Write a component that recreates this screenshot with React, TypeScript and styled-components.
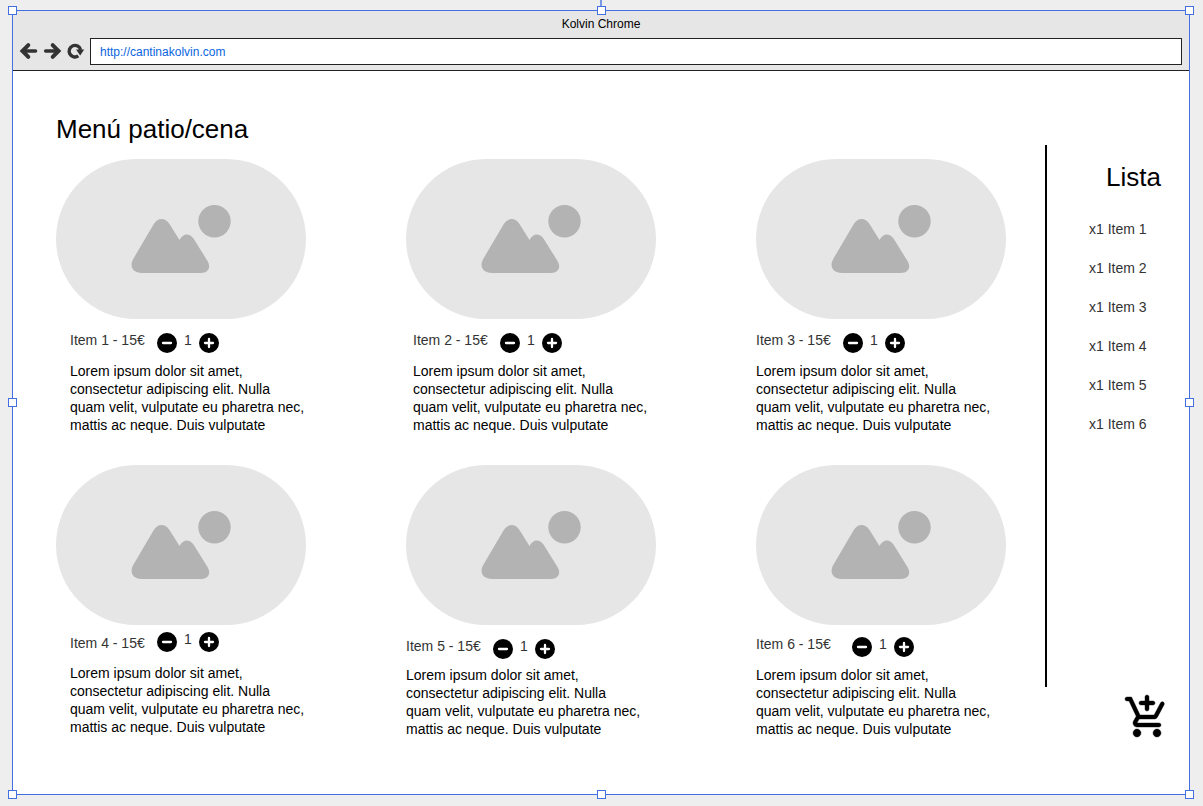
import React from "react";
import styled, { createGlobalStyle } from "styled-components";

const GlobalStyle = createGlobalStyle`
  *, *::before, *::after { box-sizing: border-box; }
  body {
    margin: 0;
    background: #eeeeee;
    color: #000;
    font-family: "Liberation Sans", Arial, sans-serif;
    font-size: 14px;
    line-height: 18px;
  }
  h1, h2, p, ul { margin: 0; padding: 0; font-weight: 400; }
  button { margin: 0; padding: 0; border: 0; background: none; color: inherit; font: inherit; cursor: pointer; }
  svg { display: block; }
`;

const Canvas = styled.div`
  display: flex;
  min-height: 100vh;
  padding: 10px 13px 11px 12px;
`;

const BrowserWindow = styled.div`
  position: relative;
  flex: 1;
  display: flex;
  flex-direction: column;
  border: 1px solid #4270e0;
  background: #fff;
`;

const HandleLayer = styled.div`
  position: absolute;
  inset: -1px 0 0 -1px;
  pointer-events: none;
`;

const Handle = styled.span<{ $x: number; $y: number }>`
  position: absolute;
  left: ${(p) => p.$x}%;
  top: ${(p) => p.$y}%;
  width: 9px;
  height: 9px;
  margin: -4px 0 0 -4px;
  border: 1px solid #4270e0;
  background: #fff;
`;

const RotationStem = styled.span`
  position: absolute;
  left: 50%;
  bottom: 100%;
  width: 2px;
  height: 10px;
  margin-left: -1px;
  background: #7b98e4;
`;

const Chrome = styled.header`
  height: 60px;
  border-bottom: 1px solid #222;
  background: #e6e6e6;
`;

const WindowTitle = styled.div`
  padding-top: 4px;
  font-size: 12px;
  text-align: center;
`;

const Toolbar = styled.div`
  display: flex;
  align-items: center;
  gap: 6px;
  padding: 5px 7px 0 8px;
`;

const NavButton = styled.button`
  width: 17px;
  height: 17px;
  color: #333;
`;

const Address = styled.input`
  flex: 1;
  min-width: 0;
  height: 27px;
  padding: 0 9px;
  border: 1px solid #222;
  border-radius: 0;
  outline: 0;
  background: #fff;
  color: #0a66e0;
  font: inherit;
  font-size: 12px;
`;

const Page = styled.div`
  flex: 1;
  display: flex;
`;

const Catalog = styled.main`
  flex: 1;
  padding: 41px 39px 0 43px;
`;

const Heading = styled.h1`
  font-size: 26px;
  line-height: 34px;
`;

const CardGrid = styled.div`
  display: grid;
  grid-template-columns: repeat(3, 250px);
  justify-content: space-between;
  row-gap: 31px;
  margin-top: 13px;
`;

const Card = styled.article`
  display: flex;
  flex-direction: column;
`;

const Picture = styled.div`
  display: flex;
  height: 160px;
  border-radius: 80px;
  background: #e6e6e6;
`;

const Details = styled.div<{ $indent: number; $top: number; $gap: number }>`
  display: flex;
  flex-direction: column;
  gap: ${(p) => p.$gap}px;
  padding-top: ${(p) => p.$top}px;
  padding-left: ${(p) => p.$indent}px;
`;

const Caption = styled.div<{ $align: "flex-start" | "flex-end" }>`
  display: flex;
  align-items: ${(p) => p.$align};
  color: #333;
`;

const ItemName = styled.h2<{ $width: number }>`
  width: ${(p) => p.$width}px;
  font-size: 14px;
`;

const Stepper = styled.div`
  display: flex;
  align-items: flex-end;
  height: 22px;
`;

const StepButton = styled.button`
  width: 20px;
  height: 20px;
`;

const Count = styled.output`
  width: 22px;
  align-self: flex-start;
  text-align: center;
`;

const Description = styled.p`
  white-space: pre-line;
`;

const Sidebar = styled.aside`
  width: 144px;
  display: flex;
  flex-direction: column;
  padding: 74px 0 53px;
`;

const OrderPanel = styled.section`
  flex: 1;
  padding: 15px 0 0 42px;
  border-left: 2px solid #000;
`;

const OrderTitle = styled.h2`
  padding-left: 17px;
  font-size: 26px;
  line-height: 34px;
`;

const OrderList = styled.ul`
  display: flex;
  flex-direction: column;
  gap: 21px;
  margin-top: 26px;
  color: #333;
  list-style: none;
`;

const CartButton = styled.button`
  align-self: flex-end;
  width: 48px;
  height: 48px;
  margin: 6px 18px 0 0;
  color: #000;
`;

type Item = {
  id: number;
  indent: number;
  top: number;
  gap: number;
  nameWidth: number;
  align: "flex-start" | "flex-end";
};

const items: Item[] = [
  { id: 1, indent: 14, top: 12, gap: 9, nameWidth: 87, align: "flex-start" },
  { id: 2, indent: 7, top: 12, gap: 9, nameWidth: 87, align: "flex-start" },
  { id: 3, indent: 0, top: 12, gap: 9, nameWidth: 87, align: "flex-start" },
  { id: 4, indent: 14, top: 5, gap: 12, nameWidth: 87, align: "flex-end" },
  { id: 5, indent: 0, top: 12, gap: 7, nameWidth: 87, align: "flex-start" },
  { id: 6, indent: 0, top: 10, gap: 9, nameWidth: 96, align: "flex-start" },
];

const blurb =
  "Lorem ipsum dolor sit amet,\nconsectetur adipiscing elit. Nulla\nquam velit, vulputate eu pharetra nec,\nmattis ac neque. Duis vulputate";

const handles = [
  [0, 0], [50, 0], [100, 0],
  [0, 50], [100, 50],
  [0, 100], [50, 100], [100, 100],
];

const BackIcon = () => (
  <svg width="17" height="17" viewBox="0 0 17 17" fill="none" stroke="currentColor" strokeLinecap="round" overflow="visible">
    <path d="M2 8H14.500" strokeWidth="3.600" />
    <path d="M7.300 2.200L1.500 8L7.300 13.800" strokeWidth="4" />
  </svg>
);

const ForwardIcon = () => (
  <svg width="17" height="17" viewBox="0 0 17 17" fill="none" stroke="currentColor" strokeLinecap="round" overflow="visible">
    <path d="M1.700 8H14" strokeWidth="3.600" />
    <path d="M8.700 2.200L14.500 8L8.700 13.800" strokeWidth="4" />
  </svg>
);

const ReloadIcon = () => (
  <svg width="17" height="17" viewBox="0 0 17 17" overflow="visible">
    <path d="M11.300 12.900A5.800 5.800 0 1 1 13.600 6.800" fill="none" stroke="currentColor" strokeWidth="3.300" />
    <path d="M9 6.500H17.200L13.200 12.500Z" fill="currentColor" />
  </svg>
);

const Landscape = () => (
  <svg width="250" height="160" viewBox="0 0 250 160" fill="#b3b3b3" aria-hidden="true">
    <circle cx="158.500" cy="62.300" r="16.200" />
    <path d="M97.500 65.500C102 58.300 109 58.300 113.500 65L123.500 81C127 74.500 133 73.500 137.500 79.500L151.500 102C155.500 108.500 152 114 145 114H86C76.500 114 73 107 77.500 99.500Z" />
  </svg>
);

const StepIcon = ({ plus = false }: { plus?: boolean }) => (
  <svg width="20" height="20" viewBox="0 0 20 20">
    <circle cx="10" cy="10" r="10" fill="#000" />
    <path d={plus ? "M6 10H14M10 6V14" : "M6 10H14"} stroke="#fff" strokeWidth="2.300" strokeLinecap="round" />
  </svg>
);

const CartIcon = () => (
  <svg width="48" height="48" viewBox="0 0 24 24" fill="currentColor" stroke="currentColor" strokeWidth="0.200">
    <path d="M12 9c.55 0 1-.45 1-1V6h2c.55 0 1-.45 1-1s-.45-1-1-1h-2V2c0-.55-.45-1-1-1s-1 .45-1 1v2H9c-.55 0-1 .45-1 1s.45 1 1 1h2v2c0 .55.45 1 1 1zm-5 9c-1.100 0-1.990.9-1.990 2S5.900 22 7 22s2-.9 2-2-.9-2-2-2zm10 0c-1.100 0-1.990.9-1.990 2s.89 2 1.990 2 2-.9 2-2-.9-2-2-2zm-8.900-5h7.450c.75 0 1.410-.41 1.750-1.030l3.240-6.140c.25-.48.08-1.080-.4-1.340-.49-.27-1.100-.08-1.360.41L15.550 11H8.530L4.270 2H2c-.55 0-1 .45-1 1s.45 1 1 1h1l3.600 7.590-1.350 2.440C4.520 15.370 5.480 17 7 17h11c.55 0 1-.45 1-1s-.45-1-1-1H7l1.100-2z" />
  </svg>
);

export default function App() {
  return (
    <>
      <GlobalStyle />
      <Canvas>
        <BrowserWindow>
          <Chrome>
            <WindowTitle>Kolvin Chrome</WindowTitle>
            <Toolbar>
              <NavButton type="button" aria-label="Atrás"><BackIcon /></NavButton>
              <NavButton type="button" aria-label="Adelante"><ForwardIcon /></NavButton>
              <NavButton type="button" aria-label="Recargar"><ReloadIcon /></NavButton>
              <Address type="text" aria-label="Dirección" defaultValue="http://cantinakolvin.com" />
            </Toolbar>
          </Chrome>
          <Page>
            <Catalog>
              <Heading>Menú patio/cena</Heading>
              <CardGrid>
                {items.map((item) => (
                  <Card key={item.id}>
                    <Picture><Landscape /></Picture>
                    <Details $indent={item.indent} $top={item.top} $gap={item.gap}>
                      <Caption $align={item.align}>
                        <ItemName $width={item.nameWidth}>Item {item.id} - 15€</ItemName>
                        <Stepper>
                          <StepButton type="button" aria-label={`Quitar Item ${item.id}`}><StepIcon /></StepButton>
                          <Count>1</Count>
                          <StepButton type="button" aria-label={`Añadir Item ${item.id}`}><StepIcon plus /></StepButton>
                        </Stepper>
                      </Caption>
                      <Description>{blurb}</Description>
                    </Details>
                  </Card>
                ))}
              </CardGrid>
            </Catalog>
            <Sidebar>
              <OrderPanel>
                <OrderTitle>Lista</OrderTitle>
                <OrderList>
                  {items.map((item) => (
                    <li key={item.id}>x1 Item {item.id}</li>
                  ))}
                </OrderList>
              </OrderPanel>
              <CartButton type="button" aria-label="Añadir al carrito"><CartIcon /></CartButton>
            </Sidebar>
          </Page>
          <HandleLayer>
            <RotationStem />
            {handles.map(([x, y]) => (
              <Handle key={`${x}-${y}`} $x={x} $y={y} />
            ))}
          </HandleLayer>
        </BrowserWindow>
      </Canvas>
    </>
  );
}
